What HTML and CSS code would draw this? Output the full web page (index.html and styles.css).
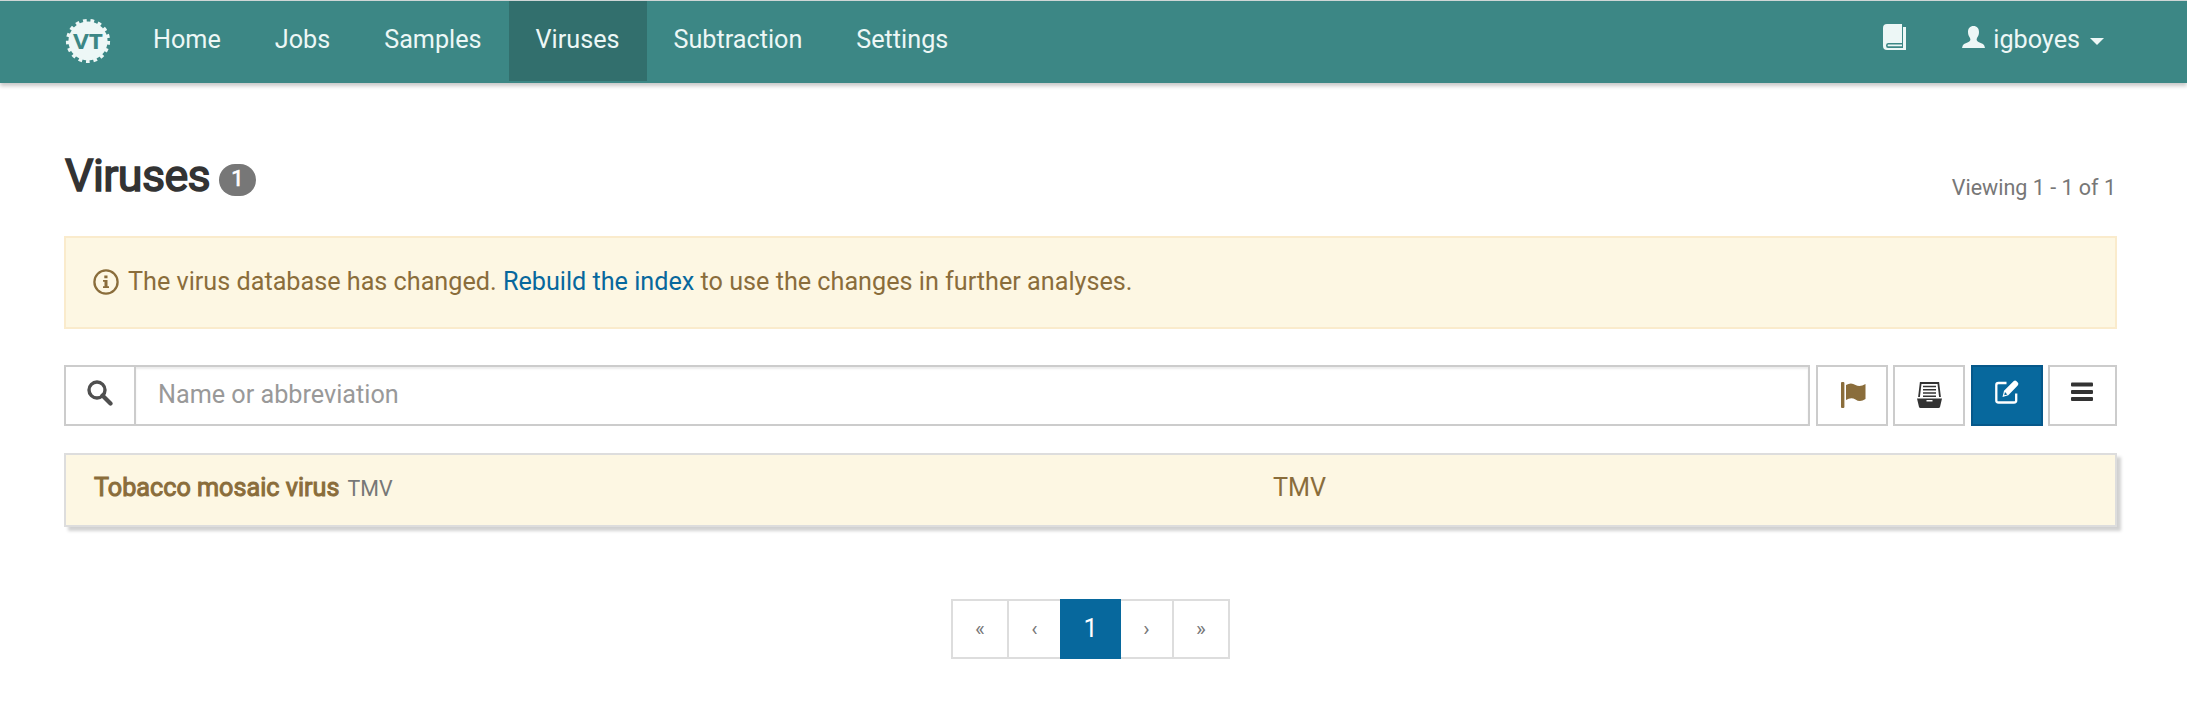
FILE: index.html
```html
<!DOCTYPE html>
<html lang="en">
<head>
<meta charset="utf-8">
<title>Viruses</title>
<link rel="stylesheet" href="styles.css">
</head>
<body>
<nav class="navbar">
  <a class="brand" aria-label="Home">
    <svg width="46" height="46" viewBox="0 0 46 46">
      <circle cx="23" cy="23" r="19.6" fill="#edf7f6"/>
      <circle cx="23" cy="23" r="20.4" fill="none" stroke="#edf7f6" stroke-width="3.4" stroke-dasharray="3.7 3.84"/>
      <text class="brand-text" x="23" y="31" text-anchor="middle" textLength="30" lengthAdjust="spacingAndGlyphs">VT</text>
    </svg>
  </a>
  <div class="links">
    <a class="link">Home</a>
    <a class="link">Jobs</a>
    <a class="link">Samples</a>
    <a class="link active">Viruses</a>
    <a class="link">Subtraction</a>
    <a class="link">Settings</a>
  </div>
  <div class="account">
    <svg class="book" width="24" height="27" viewBox="0 0 24 27">
      <path fill="#edf7f6" d="M4 0H19V19H5Q3 19 3 21.500Q3 24 5 24H20V3H23V26H4Q0 26 0 22V4Q0 0 4 0Z"/>
      <path fill="#edf7f6" d="M5 20.500H19V22.300H5Q4 21.400 5 20.500Z"/>
    </svg>
    <svg class="person" width="23" height="22" viewBox="0 0 23 22">
      <path fill="#edf7f6" d="M11.500 0C15 0 17 2.500 17 6C17 9 16 10.500 15 12C14 14 15 15.500 17 16.300L21 18Q22.500 18.800 23 22H0Q.5 18.800 2 18L6 16.300C8 15.500 9 14 8 12C7 10.500 6 9 6 6C6 2.500 8 0 11.500 0Z"/>
    </svg>
    <span class="user">igboyes</span>
    <span class="caret"></span>
  </div>
</nav>
<main class="page">
  <header class="heading">
    <h1 class="title">Viruses</h1>
    <span class="badge">1</span>
    <span class="viewing">Viewing 1 - 1 of 1</span>
  </header>
  <div class="alert">
    <svg class="info" width="26" height="26" viewBox="0 0 26 26">
      <circle cx="13" cy="13" r="11.600" fill="none" stroke="#8a6d3b" stroke-width="2.300"/>
      <path fill="#8a6d3b" d="M11.300 6.500H14.500V9.300H11.300ZM10 11H14.500V17.200H16V19H10V17.200H11.500V12.800H10Z"/>
    </svg>
    <span>The virus database has changed. <a class="rebuild">Rebuild the index</a> to use the changes in further analyses.</span>
  </div>
  <div class="toolbar">
    <div class="search">
      <span class="addon">
        <svg width="26" height="26" viewBox="0 0 26 26" fill="none" stroke="#4f4f4f">
          <circle cx="10" cy="10" r="8" stroke-width="3.400"/>
          <path d="M15.500 15.500L23.500 23.500" stroke-width="4.200" stroke-linecap="round"/>
        </svg>
      </span>
      <input class="field" type="text" placeholder="Name or abbreviation">
    </div>
    <button class="button flag" aria-label="Flagged">
      <svg width="25" height="26" viewBox="0 0 25 26" fill="#8a6d3b">
        <rect x="0" y="0" width="3.400" height="26" rx="1"/>
        <path d="M5 3Q10 0 14.500 3Q19 5.300 24.500 2V17Q19 20.800 14.500 17.500Q10 15 5 18Z"/>
      </svg>
    </button>
    <button class="button archive" aria-label="Archive">
      <svg width="25" height="26" viewBox="0 0 25 26">
        <path d="M2 15L3.700 1H21.300L23 15" fill="none" stroke="#333" stroke-width="1.800"/>
        <path d="M6 4.500H19M6 7.800H19M6 11.100H19M6 14.300H19" stroke="#333" stroke-width="1.500"/>
        <path fill="#333" fill-rule="evenodd" d="M0 16.500H25L23 25Q22.700 26 21.500 26H3.500Q2.300 26 2 25ZM9.500 18V19.600H15.500V18Z"/>
      </svg>
    </button>
    <button class="button primary" aria-label="Create">
      <svg width="24" height="24" viewBox="0 0 24 24">
        <path d="M11.500 3H3.500Q1.300 3 1.300 5V20.500Q1.300 22.500 3.500 22.500H19Q21.200 22.500 21.200 20.500V13.500" fill="none" stroke="#fff" stroke-width="2.300"/>
        <path fill="#fff" fill-rule="evenodd" d="M7.500 17L9 10.800L18.500 1.300Q20 0 21.300 1L23 2.700Q24 4 22.700 5.500L13.300 15.200ZM10 12L9.200 15.300L12.300 14.500Z"/>
      </svg>
    </button>
    <button class="button menu" aria-label="List">
      <svg width="22" height="20" viewBox="0 0 22 20" fill="#333">
        <rect y="0.500" width="22" height="4" rx="1"/><rect y="8" width="22" height="4" rx="1"/><rect y="15" width="22" height="4" rx="1"/>
      </svg>
    </button>
  </div>
  <div class="item">
    <span class="name"><strong class="strong">Tobacco mosaic virus</strong><small class="small">TMV</small></span>
    <span>TMV</span>
  </div>
  <div class="pages">
    <a class="pg first">«</a><a class="pg prev">‹</a><a class="pg current">1</a><a class="pg next">›</a><a class="pg last">»</a>
  </div>
</main>
</body>
</html>
```
FILE: styles.css
```css
* { box-sizing: border-box; }
body { margin: 0; background: #fff; color: #333; font: 25.2px/36px Roboto, sans-serif; }
.navbar { display: flex; height: 83px; padding: 0 83px 0 65px; background: #3c8785; border-top: 1px solid #cfd6d6; box-shadow: 0 3px 4px rgba(0,0,0,.22); color: #edf7f6; }
.brand { width: 61px; padding-top: 17px; }
.brand svg { display: block; }
.brand-text { font: bold 21px "Open Sans", sans-serif; fill: #3c8785; }
.links { display: flex; height: 80px; }
.link { padding: 21px 27px 20px; }
.active { background: #326f6d; }
.account { display: flex; align-items: flex-start; margin-left: auto; }
.book { margin: 23px 55px 0 0; }
.person { margin: 25px 8px 0 0; }
.user { margin: 21px 10px 0 0; }
.caret { width: 14px; margin-top: 37px; border: 7px solid transparent; border-top-color: #edf7f6; border-bottom: 0; }
.page { width: 2053px; margin-left: 64px; }
.heading { display: flex; height: 153px; }
.title { width: 145px; margin: 68px 9px 0 1px; font-size: 44.800px; line-height: 50px; font-weight: 400; letter-spacing: -.6px; -webkit-text-stroke: 1.5px #333; }
.badge { width: 37px; height: 32px; margin-top: 81px; border-radius: 16px; background: #777; color: #fff; font-size: 22px; line-height: 29px; text-align: center; -webkit-text-stroke: .7px #fff; }
.viewing { margin: 87px 1px 0 auto; font-size: 21.500px; color: #777; }
.alert { display: flex; height: 93px; padding: 26px 27px; background: #fdf7e3; border: 2px solid #faebcc; color: #8a6d3b; }
.info { margin: 5px 9px 0 0; }
.rebuild { color: #07689d; }
.toolbar { display: flex; height: 61px; margin-top: 36px; }
.search { display: flex; width: 1746px; margin-right: 6px; border: 2px solid #ccc; }
.addon { width: 70px; padding: 13px 0 0 21px; border-right: 2px solid #ccc; }
.addon svg { display: block; }
.field { flex: 1; padding: 0 22px 2px; border: 0; outline: 0; background: #fff; font: 25.2px Roboto, sans-serif; box-shadow: inset 0 2px 2px rgba(0,0,0,.075); }
.field::placeholder { color: #999; opacity: 1; }
.button { display: flex; width: 72px; padding: 15px 0 0 23px; border: 2px solid #ccc; background: #fff; }
.archive { margin-left: 5px; padding-left: 22px; }
.primary { margin-left: 6px; padding: 13px 0 0 22px; background: #07689d; border-color: #06588a; }
.menu { width: 69px; margin-left: 5px; padding: 15px 0 0 21px; }
.item { display: flex; height: 74px; margin-top: 27px; padding: 15px 27px; border: 2px solid #ddd; background: #fdf7e3; color: #8a6d3b; box-shadow: 4px 4px 3px rgba(0,0,0,.18); }
.name { width: 1180px; }
.strong { margin-left: 1px; font-weight: 400; -webkit-text-stroke: 1px #8a6d3b; }
.small { margin-left: 8px; font-size: 21.400px; color: #777; }
.pages { display: flex; width: 279px; height: 60px; margin: 72px 0 0 887px; color: #777; font-size: 21px; line-height: 57px; text-align: center; }
.pg { border: 2px solid #ddd; }
.first { width: 58px; }
.prev { width: 51px; border-width: 2px 0; }
.current { width: 61px; background: #07689d; border-color: #07689d; color: #fff; font-size: 25.2px; line-height: 55px; }
.next { width: 51px; border-width: 2px 0; }
.last { width: 58px; }
```
